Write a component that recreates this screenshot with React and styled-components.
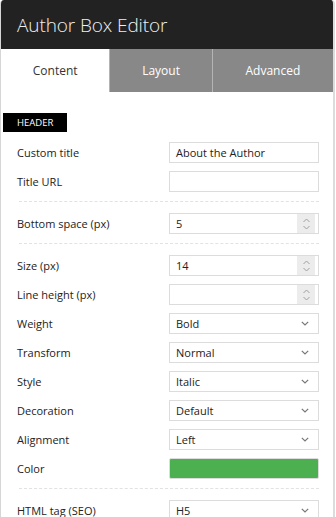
import React from "react";
import styled, { createGlobalStyle } from "styled-components";

const GlobalStyle = createGlobalStyle`
  body {
    margin: 0;
    background: #fff;
    font-family: "Open Sans", "Noto Sans", sans-serif;
  }
`;

const rows = [
  { label: "Custom title", kind: "text", value: "About the Author" },
  { label: "Title URL", kind: "text", value: "" },
  { divider: true },
  { label: "Bottom space (px)", kind: "number", value: "5" },
  { divider: true },
  { label: "Size (px)", kind: "number", value: "14" },
  { label: "Line height (px)", kind: "number", value: "" },
  { label: "Weight", kind: "select", value: "Bold" },
  { label: "Transform", kind: "select", value: "Normal" },
  { label: "Style", kind: "select", value: "Italic" },
  { label: "Decoration", kind: "select", value: "Default" },
  { label: "Alignment", kind: "select", value: "Left" },
  { label: "Color", kind: "color", value: "#4caf50" },
  { divider: true },
  { label: "HTML tag (SEO)", kind: "select", value: "H5" },
];

const Spinner = () => (
  <SpinBox>
    <svg width="9" height="14" viewBox="0 0 9 14" fill="none" stroke="#a0a0a0" strokeWidth="1">
      <path d="M1.5 5 L4.5 2 L7.5 5" />
      <path d="M1.5 9 L4.5 12 L7.5 9" />
    </svg>
  </SpinBox>
);

const Chevron = () => (
  <ArrowBox>
    <svg width="8" height="5" viewBox="0 0 8 5" fill="none" stroke="#777" strokeWidth="1.2">
      <path d="M0.8 0.8 L4 4 L7.2 0.8" />
    </svg>
  </ArrowBox>
);

const Field = ({ kind, value }) => {
  if (kind === "color") return <Swatch $color={value} />;
  return (
    <Box>
      <Value>{value}</Value>
      {kind === "number" && <Spinner />}
      {kind === "select" && <Chevron />}
    </Box>
  );
};

const App = () => {
  return (
    <>
      <GlobalStyle />
      <Panel>
        <TitleBar>Author Box Editor</TitleBar>
        <Tabs>
          <Tab $active>Content</Tab>
          <Tab $w="102px">Layout</Tab>
          <Tab $w="121px">Advanced</Tab>
        </Tabs>
        <Body>
          <Badge>HEADER</Badge>
          {rows.map((r, i) =>
            r.divider ? (
              <Divider key={i} />
            ) : (
              <Row key={i}>
                <Label>{r.label}</Label>
                <Field kind={r.kind} value={r.value} />
              </Row>
            )
          )}
        </Body>
      </Panel>
    </>
  );
};

const Panel = styled.div`
  width: 332px;
  min-height: 517px;
  border-left: 1px solid #d6d6d6;
  border-right: 2px solid #dcdcdc;
  border-radius: 4px 4px 0 0;
  overflow: hidden;
  background: #fff;
`;

const TitleBar = styled.div`
  height: 49px;
  background: #222;
  color: #f0f0f0;
  font-size: 19px;
  font-weight: 300;
  letter-spacing: -0.1px;
  line-height: 50px;
  padding-left: 16px;
`;

const Tabs = styled.div`
  display: flex;
  height: 43px;
`;

const Tab = styled.div`
  width: ${(p) => (p.$active ? "109px" : p.$w)};
  display: flex;
  align-items: center;
  justify-content: center;
  font-size: 12px;
  color: ${(p) => (p.$active ? "#333" : "#fff")};
  background: ${(p) => (p.$active ? "#fff" : "#888")};
  border-left: ${(p) => (p.$active ? "none" : "1px solid #b4b4b4")};
`;

const Body = styled.div`
  padding: 21px 14px 0 2px;
`;

const Badge = styled.div`
  width: 50px;
  height: 19px;
  background: #000;
  color: #fff;
  font-size: 9.5px;
  line-height: 20px;
  padding-left: 14px;
  margin-bottom: 6px;
`;

const Row = styled.div`
  display: flex;
  align-items: center;
  justify-content: space-between;
  padding: 4px 0 4px 14px;
`;

const Label = styled.div`
  font-size: 11px;
  color: #222;
`;

const Box = styled.div`
  width: 148px;
  height: 19px;
  border: 1px solid #dcdcdc;
  display: flex;
  align-items: center;
  font-size: 11px;
  color: #222;
`;

const Value = styled.span`
  flex: 1;
  padding-left: 6px;
`;

const SpinBox = styled.div`
  width: 18px;
  height: 19px;
  margin-right: 3px;
  background: #ececec;
  display: flex;
  align-items: center;
  justify-content: center;
`;

const ArrowBox = styled.div`
  width: 20px;
  display: flex;
  justify-content: center;
  margin-right: 3px;
`;

const Swatch = styled.div`
  width: 148px;
  height: 19px;
  border: 1px solid #dcdcdc;
  border-radius: 2px;
  background: ${(p) => p.$color};
`;

const Divider = styled.div`
  margin: 5px 0 7px 16px;
  border-top: 1px dashed #e2e2e2;
`;

export default App;
